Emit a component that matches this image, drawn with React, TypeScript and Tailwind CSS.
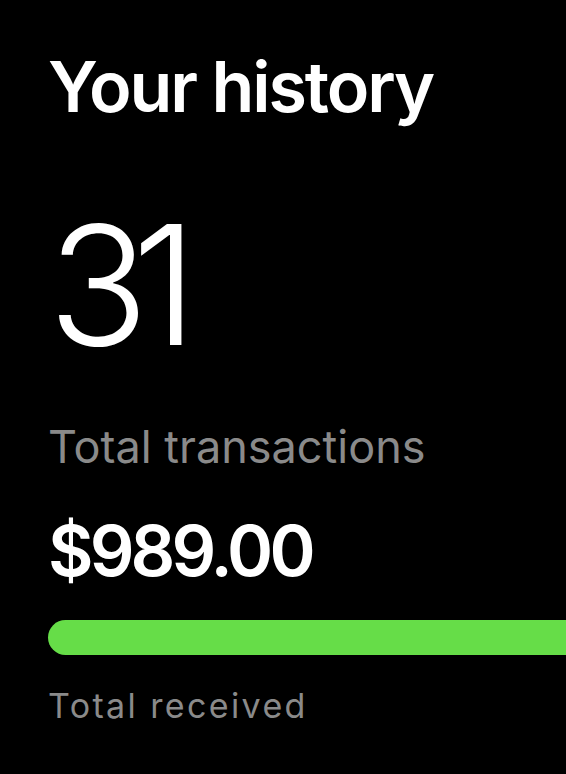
export default function App() {
  return (
    <div className="min-h-[774px] w-full overflow-hidden bg-black text-white" style={{ fontFamily: "Inter, 'Noto Sans', sans-serif" }}>
      <div className="flex flex-col pl-12">
        <h1 className="mt-[52px] text-[70px] font-semibold leading-none tracking-[-0.03em]">Your history</h1>
        <div className="mt-[80px] text-[166px] font-light leading-none tracking-[-0.1em]">31</div>
        <div className="mt-[56px] text-[45px] font-normal leading-none tracking-[0em] text-[#8a8a8a]">Total transactions</div>
        <div className="mt-[47px] text-[70px] font-semibold leading-none tracking-[-0.055em]">$989.00</div>
        <div className="mt-[34px] h-[35px] w-[600px] rounded-full bg-[#66dd48]" />
        <div className="mt-[34px] text-[34px] font-normal leading-none tracking-[0.07em] text-[#8a8a8a]">Total received</div>
      </div>
    </div>
  );
}
